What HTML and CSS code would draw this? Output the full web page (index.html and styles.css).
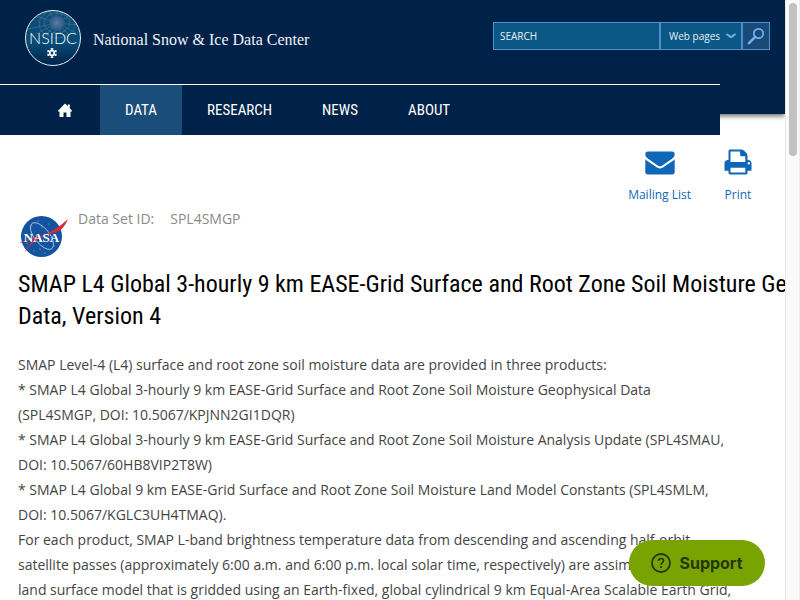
FILE: index.html
```html
<!DOCTYPE html>
<html lang="en">
<head>
<meta charset="utf-8">
<meta name="viewport" content="width=device-width, initial-scale=1">
<title>SMAP L4 Global 3-hourly 9 km EASE-Grid Surface and Root Zone Soil Moisture Geophysical Data</title>
<link rel="stylesheet" href="styles.css">
</head>
<body>
<div class="page">
  <header class="header">
    <div class="masthead">
      <a class="brand" href="#">
        <svg class="brand-logo" viewBox="0 0 58 58" aria-hidden="true">
          <defs>
            <linearGradient id="globe" x1="0" y1="0" x2="0" y2="1">
              <stop offset="0" stop-color="#145078"/>
              <stop offset=".6" stop-color="#064a76"/>
              <stop offset="1" stop-color="#002248"/>
            </linearGradient>
            <radialGradient id="pole">
              <stop offset="0" stop-color="#5d7da0"/>
              <stop offset="1" stop-color="#245682"/>
            </radialGradient>
            <clipPath id="disc"><circle cx="29" cy="29" r="27"/></clipPath>
          </defs>
          <circle cx="29" cy="29" r="27.5" fill="url(#globe)"/>
          <g clip-path="url(#disc)" fill="none" stroke="#7ba6bf" stroke-width=".6" opacity=".5">
            <ellipse cx="33" cy="14" rx="13" ry="10"/>
            <ellipse cx="33" cy="15" rx="18" ry="14"/>
            <path d="M33 14V0M33 14l7-13M33 14l14-8M33 14l22 2M33 14l19 10M33 14l12 12M33 14l5 12M33 14l-3 12M33 14l-11 12M33 14L12 25M33 14L4 20M33 14L12 7M33 14L24 1"/>
          </g>
          <circle cx="33" cy="14" r="8" fill="url(#pole)"/>
          <circle cx="29" cy="29" r="27.5" fill="none" stroke="#e8f0f5" stroke-width="1"/>
          <text x="29" y="35" text-anchor="middle" class="logo-text">NSIDC</text>
          <g stroke="#fff" fill="none">
            <path d="M28 39v10M23.500 41.500l9 5M32.500 41.500l-9 5" stroke-width="1.300"/>
            <circle cx="28" cy="44" r="2.600" stroke-width="1.200"/>
            <path d="M26.500 39.800h3M26.500 48.200h3M23.700 43.200l1-2.200M31.300 47l1-2.200M23.700 44.800l1 2.200M31.300 41l1 2.200" stroke-width="1"/>
          </g>
          <circle cx="28" cy="44" r="1.200" fill="#0a365f"/>
        </svg>
        <span class="brand-name">National Snow &amp; Ice Data Center</span>
      </a>
      <form class="search">
        <input class="search-text" type="text" placeholder="SEARCH" aria-label="Search">
        <span class="scope">
          <select class="scope-select" aria-label="Search in"><option>Web pages</option></select>
          <svg class="scope-arrow" viewBox="0 0 10 6" aria-hidden="true"><path d="M1 1.500c1.500 0 2.500 2.500 4 2.500s2.500-2.500 4-2.500" fill="none" stroke="#75b1f0" stroke-width="1.800" stroke-linecap="round"/></svg>
        </span>
        <button class="search-button" type="button" aria-label="Run search">
          <svg viewBox="0 0 18 18" aria-hidden="true"><circle cx="11.500" cy="6.500" r="4.700" fill="none" stroke="#75b1f0" stroke-width="1.700"/><path d="M8 10.200L2 16.200" stroke="#75b1f0" stroke-width="2.600" stroke-linecap="round"/></svg>
        </button>
      </form>
    </div>
    <nav class="nav" aria-label="Main">
      <a class="nav-item nav-home" href="#" aria-label="Home"><svg viewBox="0 0 14 14" aria-hidden="true"><path d="M7 .5l2.800 2.800V1.500h2V5.300L14 7.700v.8h-1.500V14H8.500V9.500h-3V14H1.500V8.500H0v-.8z" fill="#fff"/></svg></a>
      <a class="nav-item nav-active" href="#">DATA</a>
      <a class="nav-item" href="#">RESEARCH</a>
      <a class="nav-item" href="#">NEWS</a>
      <a class="nav-item" href="#">ABOUT</a>
    </nav>
  </header>

  <main class="content">
    <div class="tools">
      <a class="tool" href="#">
        <svg class="tool-icon" viewBox="0 0 30 30" aria-hidden="true"><path fill="#0f68b7" d="M3 3.500h24a2.700 2.700 0 0 1 2.700 2.700c0 2-1.400 3.600-3 4.700L18 16.900c-1 .7-1.900 1.400-3 1.400s-2-.7-3-1.400L3.400 10.900C1.700 9.800.3 8.100.3 6.200A2.700 2.700 0 0 1 3 3.500zM.3 11.300c.5.600 1.100 1 1.700 1.400l8.600 5.900c1.300 1 2.700 1.900 4.400 1.900s3.100-.9 4.400-1.900l8.600-5.900c.6-.4 1.200-.8 1.700-1.400v12.500a2.700 2.700 0 0 1-2.700 2.700H3a2.700 2.700 0 0 1-2.700-2.700z"/></svg>
        <span>Mailing List</span>
      </a>
      <a class="tool" href="#">
        <svg class="tool-icon" viewBox="0 0 30 30" aria-hidden="true"><path fill="#0f68b7" fill-rule="evenodd" d="M5.500 12V3c0-.9.700-1.600 1.600-1.600h11.200c.9 0 2 .5 2.600 1.100l2.500 2.500c.6.600 1.100 1.700 1.100 2.600V12h.5a3.500 3.500 0 0 1 3.500 3.500v6.700c0 .3-.3.600-.6.600h-3.400v2c0 .9-.7 1.600-1.600 1.600H7.100c-.9 0-1.600-.7-1.600-1.600v-2H2.100c-.3 0-.6-.3-.6-.6v-6.700A3.500 3.500 0 0 1 5 12zM7.500 3.500v10.400h14.800V8.200h-3.600c-.9 0-1.600-.7-1.600-1.600V3.500zM7.500 19.800v4.700h14.800v-4.700zM25.800 14a1.200 1.200 0 1 0 0 2.400 1.200 1.200 0 0 0 0-2.400z"/></svg>
        <span>Print</span>
      </a>
    </div>

    <div class="dataset">
      <svg class="nasa" viewBox="0 0 50 44" aria-hidden="true">
        <circle cx="23.500" cy="22.500" r="20.500" fill="#14539f"/>
        <g fill="#b9cce5"><circle cx="14" cy="12" r=".5"/><circle cx="20" cy="7" r=".5"/><circle cx="31" cy="10" r=".5"/><circle cx="9" cy="29" r=".5"/><circle cx="22" cy="35" r=".6"/><circle cx="27" cy="39" r=".5"/><circle cx="36" cy="32" r=".5"/><circle cx="16" cy="37" r=".5"/><circle cx="24" cy="13" r=".5"/></g>
        <ellipse cx="24" cy="22" rx="7.500" ry="16" transform="rotate(-39 24 22)" fill="none" stroke="#b9cce5" stroke-width=".8"/>
        <path d="M0 29c15-3 34-9 50-24-4 9-7 12-15 14-13 3-22 10-29 20C12 28 20 20 33 17.500 21 20.500 10 26.500 0 29z" fill="#d92a38"/>
        <text x="23.500" y="27.500" text-anchor="middle" class="nasa-text">NASA</text>
      </svg>
      <dl class="dataset-id"><dt>Data Set ID:</dt><dd>SPL4SMGP</dd></dl>
    </div>

    <h1 class="title">SMAP L4 Global 3-hourly 9 km EASE-Grid Surface and Root Zone Soil Moisture Geophysical<br>Data, Version 4</h1>

    <p class="summary">SMAP Level-4 (L4) surface and root zone soil moisture data are provided in three products:<br>
    * SMAP L4 Global 3-hourly 9 km EASE-Grid Surface and Root Zone Soil Moisture Geophysical Data<br>
    (SPL4SMGP, DOI: 10.5067/KPJNN2GI1DQR)<br>
    * SMAP L4 Global 3-hourly 9 km EASE-Grid Surface and Root Zone Soil Moisture Analysis Update (SPL4SMAU,<br>
    DOI: 10.5067/60HB8VIP2T8W)<br>
    * SMAP L4 Global 9 km EASE-Grid Surface and Root Zone Soil Moisture Land Model Constants (SPL4SMLM,<br>
    DOI: 10.5067/KGLC3UH4TMAQ).<br>
    For each product, SMAP L-band brightness temperature data from descending and ascending half-orbit<br>
    satellite passes (approximately 6:00 a.m. and 6:00 p.m. local solar time, respectively) are assimilated into a<br>
    land surface model that is gridded using an Earth-fixed, global cylindrical 9 km Equal-Area Scalable Earth Grid,</p>
  </main>
</div>
<div class="scrollbar" aria-hidden="true"><div class="scroll-thumb"></div></div>
<button class="support" type="button">
  <svg class="support-icon" viewBox="0 0 20 20" aria-hidden="true"><circle cx="10" cy="10" r="9" fill="none" stroke="#263706" stroke-width="1.800"/><path d="M7.500 8c0-1.600 1.100-2.500 2.500-2.500s2.500.9 2.500 2.300c0 1.700-2.500 1.900-2.500 4" fill="none" stroke="#263706" stroke-width="1.700"/><circle cx="10" cy="14.200" r="1.100" fill="#263706"/></svg>
  <span>Support</span>
</button>
</body>
</html>
```
FILE: styles.css
```css
* { box-sizing: border-box; }

body {
  margin: 0;
  height: 100vh;
  display: flex;
  overflow: hidden;
  background: #fff;
  color: #444;
  font-family: "Open Sans", "Noto Sans", sans-serif;
  font-size: 14px;
}

a { text-decoration: none; }

.page { flex: 1; min-width: 0; overflow: hidden; }

.header {
  height: 114px;
  background: #002248;
  box-shadow: 0 2px 5px rgba(0, 0, 0, .6);
}

.masthead {
  height: 84px;
  display: flex;
  justify-content: space-between;
  align-items: flex-start;
  padding: 9px 15px 0 24px;
}

.brand { display: flex; align-items: center; gap: 11px; color: #f0f4f8; }
.brand-logo { width: 58px; height: 58px; }
.logo-text { font-family: Lato, sans-serif; font-size: 16px; font-weight: 300; fill: #fff; }
.brand-name { padding-top: 4px; font-family: "Liberation Serif", serif; font-size: 16px; line-height: 20px; }

.search {
  display: flex;
  width: 277px;
  height: 28px;
  margin-top: 13px;
  border: 1px solid #4a90d0;
  background: #0b5785;
}

.search-text {
  flex: 1;
  min-width: 0;
  border: 0;
  padding: 0 6px;
  background: transparent;
  color: #e6f1f8;
  font: 10px "Open Sans", sans-serif;
}
.search-text::placeholder { color: #e6f1f8; opacity: 1; }

.scope { position: relative; width: 82px; border-left: 2px solid #4a90d0; }
.scope-select {
  appearance: none;
  width: 100%;
  height: 100%;
  border: 0;
  padding: 0 8px;
  background: transparent;
  color: #e6f1f8;
  font: 10px "Open Sans", sans-serif;
}
.scope-arrow { position: absolute; right: 5px; top: 10px; width: 10px; height: 6px; pointer-events: none; }

.search-button {
  width: 28px;
  border: 0;
  border-left: 2px solid #4a90d0;
  padding: 0;
  background: #1a4a78;
  display: grid;
  place-items: center;
}
.search-button svg { width: 18px; height: 18px; }

.nav {
  height: 51px;
  margin-right: 65px;
  padding-left: 30px;
  display: flex;
  position: relative;
  border-top: 1px solid #fff;
  background: #002248;
}
.nav-item {
  display: flex;
  align-items: center;
  padding: 0 25px;
  color: #fff;
  font: 15px "Roboto Condensed", Roboto, sans-serif;
}
.nav-home { width: 70px; padding: 0 28px; }
.nav-home svg { width: 14px; height: 14px; flex: none; }
.nav-active { background: #1a4d7a; }

.content { padding: 34px 32px 0 18px; }

.tools { display: flex; justify-content: flex-end; gap: 32px; }
.tool {
  display: flex;
  flex-direction: column;
  align-items: center;
  gap: 8px;
  color: #0f68b7;
  font-size: 12px;
  line-height: 18px;
}
.tool-icon { width: 30px; height: 30px; }

.dataset { display: flex; align-items: flex-start; gap: 10px; margin-top: 5px; color: #8a8a8a; }
.nasa { width: 50px; height: 49px; padding-top: 5px; }
.nasa-text { font: bold 13px "Liberation Serif", serif; fill: #fff; }
.dataset-id { display: flex; gap: 16px; margin: 0; line-height: 20px; }
.dataset-id dd { margin: 0; }

.title {
  margin: 10px 0 20px;
  color: #000;
  font: 24px/32px "Roboto Condensed", Roboto, sans-serif;
  white-space: nowrap;
}

.summary { margin: 0; line-height: 25px; }

.scrollbar {
  flex: none;
  width: 15px;
  padding: 3px 3px 0;
  border-left: 1px solid #e8e8e8;
  border-right: 1px solid #ededed;
  background: #fafafa;
}
.scroll-thumb { width: 8px; height: 153px; border-radius: 4px; background: #c1c1c1; }

.support {
  position: fixed;
  right: 35px;
  bottom: 14px;
  width: 136px;
  height: 46px;
  display: flex;
  align-items: center;
  justify-content: center;
  gap: 8px;
  border: 0;
  border-radius: 23px;
  padding: 0;
  background: #78a300;
  color: #263706;
  font: bold 16px Inter, sans-serif;
}
.support-icon { width: 20px; height: 20px; }
```
